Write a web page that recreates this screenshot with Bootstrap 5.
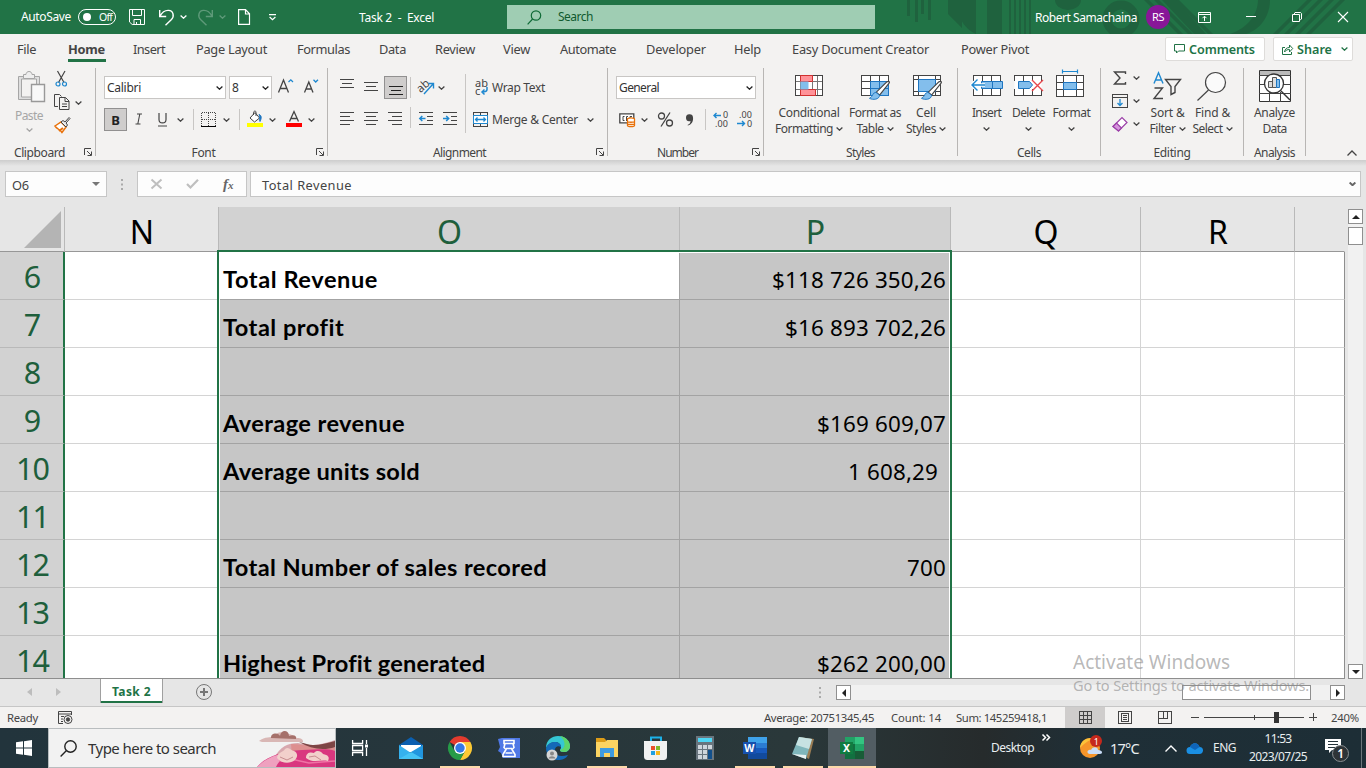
<!DOCTYPE html>
<html lang="en">
<head>
<meta charset="utf-8">
<title>Task 2 - Excel</title>
<link href="https://cdn.jsdelivr.net/npm/bootstrap@5.3.0/dist/css/bootstrap.min.css" rel="stylesheet">
<style>
body{width:1366px;height:768px;overflow:hidden;background:#e6e6e6;font-family:"Noto Sans","Open Sans",sans-serif;font-size:12px;line-height:16px;color:#444;white-space:nowrap}
svg{display:block;overflow:visible;flex:none}
.g{display:grid;align-items:center}
.cv{width:7px;height:4px;fill:none;stroke:#444;stroke-width:1.3}
.ln{stroke:#444;stroke-width:1;fill:none;shape-rendering:crispEdges}
.k{stroke:#444;fill:none}
.b{stroke:#1e88d0;fill:none}
.w{stroke:#fff;fill:none}
/* title bar */
.titlebar{height:34px;background:#217346;color:#fff;padding-left:21px;grid-template-columns:57px 51px 30px 21px 18px 21px 19px 31px 90px 148px 368px 160px 111px 52px 48px 46px 46px 28px}
.titlebar>*{position:relative}
.titlebar .deco{position:absolute;right:0;top:0;overflow:hidden}
.titlebar .cv{stroke:#fff}
.toggle{width:38px;height:16px;border:1px solid #fff;border-radius:8px;font-size:10.5px;line-height:13px}
.knob{width:8px;height:8px;border-radius:50%;background:#fff;margin-left:4px}
.searchbox{height:24px;background:#9fcdb3;color:#0f5a2e}
.searchbox svg{margin-left:20px}
.searchbox span{margin-left:16px}
.avatar{width:24px;height:24px;border-radius:50%;background:#881798;font-size:11px}
.dim{opacity:.28}
.drop1{padding-top:1px}
/* tabs */
.tabs{height:30px;background:#f3f2f1;font-size:12.8px;padding-left:17px;grid-template-columns:51px 65px 63px 101px 82px 56px 68px 57px 86px 88px 58px 169px 204px 108px 80px}
.tabs>span{position:relative;height:16px}
.tabs .on{font-weight:700}
.tabs .on::after{content:"";position:absolute;left:0;bottom:-5px;width:38px;height:3px;background:#217346}
.pill{height:24px;background:#fff;border:1px solid #dedcda;border-radius:2px;color:#217346;font-weight:600;font-size:12.6px}
.pill span{padding-top:1px}
.pill svg{stroke:#217346}
/* ribbon */
.ribbon{height:96px;background:#f3f2f1;padding-top:4px}
.grp{height:88px;border-right:1px solid #b8b6b4;position:relative}
.grp .body{height:76px;align-items:start;display:flow-root}
.grp .body.g{display:grid}
.grp .cap{height:16px;line-height:17px}
.cap.lx{padding-right:16px}
.launch{position:absolute;right:3px;bottom:0;width:8px;height:8px}
.combo{height:23px;background:#fff;border:1px solid #c8c6c4;color:#333;padding:0 2px}
.combo .cv{stroke:#222}
.combo.name{width:122px}.combo.size{width:43px}.combo.fmt{width:140px;margin:8px 0 0 8px}
.pressed{width:23px;height:23px;background:#cfcdcc;border:1px solid #919090;color:#222;font-size:13px}
.pressed .ln{stroke:#222}
.vs{width:1px;background:#c8c6c4;height:21px}
.big{text-align:center;padding-top:2px}
.big .ic{height:35px}
.big .cv{display:inline-block;vertical-align:2px}
.i5{padding:4px 0 0 5px}.i6{padding:0 0 0 6px}.i7{padding:4px 0 0 7px}.i17{padding:4px 0 0 17px}.i72{padding:2px 0 0 7px}
.gc{width:96px}.gf{width:232px}.ga{width:280px}.gn{width:156px}.gs{width:194px}.gce{width:143px}.ge{width:143px}.gan{width:62px}
.clip{grid-template-columns:18px 36px 21px 18px}
.paste{color:#a6a6a6;padding-top:3px}
.paste span{display:block;margin:5px 0 4px -3px}
.paste .cv{stroke:#a6a6a6;margin-left:8px}
.cutcol{padding-top:3px;display:grid;row-gap:7px}
.copydrop{padding-top:33px}
.clipcap{padding-left:14px}
.f1{padding:8px 0 0 8px;grid-template-columns:125px 49px 26px 20px}
.f2{padding:9px 0 0 8px;grid-template-columns:23px 23px 27px 16px 8px 22px 16px 8px 22px 17px 22px 8px}
.a0{grid-template-columns:138px 142px}
.a1{grid-template-columns:24px 20px 26px 8px 20px 8px;padding:8px 0 0 12px}
.a2{grid-template-columns:24px 24px 22px 9px 24px 20px;padding:7px 0 0 12px;height:30px}
.a3{border-left:1px solid #c8c6c4;height:59px;margin:6px 0 0 -1px;padding:2px 0 0 7px}
.wrapline,.mergeline{height:23px}
.wrapline svg{margin-left:2px}
.wrapline span{margin-left:-3px}
.mergeline{margin-top:9px}
.mergeline .cv{margin-left:9px}
.n2{padding:9px 0 0 11px;grid-template-columns:22px 17px 28px 19px 8px 24px 20px;height:32px}
.s0{grid-template-columns:90px 42px 60px}
.fa{margin-left:-5px}
.c0{grid-template-columns:8px 41px 43px 43px}
.e0{grid-template-columns:11px 33px 45px 45px}
.e1{grid-template-columns:21px 8px;height:23px;position:relative;top:-2px}
.fold{padding:0 9px 4px}
/* formula bar */
.fbar{height:47px;background:linear-gradient(#cdcdcd,#e6e6e6 6px);padding:11px 5px 10px;font-size:12.8px}
.box{height:26px;background:#fdfdfd;border:1px solid #c6c6c6}
.box span{padding-top:1px}
.nbox{width:102px;padding:0 6px}
.fbtn{width:110px;padding-left:13px;gap:24px}
.fbtn b{font:italic bold 15px "Liberation Serif",serif;color:#666}
.fbtn b i{font-size:11px}
.finput{margin-left:3px;padding:0 4px 0 11px}
.finput .cv{stroke:#666;stroke-width:2}
.dots{width:30px}
/* worksheet */
.sheet{height:472px;overflow:hidden}
.cells{width:1345px;background:#fff;position:relative;overflow:hidden;height:472px;border-bottom:1px solid #8e8e8e}
.r{display:grid;grid-template-columns:65px 154px 461px 271px 190px 154px 50px}
.r>div{border-right:1px solid #d4d4d4;border-bottom:1px solid #d4d4d4;height:48px;overflow:hidden}
.r>div:last-child{border-right-color:#8e8e8e}
.r.h>div{height:45px;background:#e6e6e6;border-bottom:1px solid #979797;border-right:1px solid #b9b9b9;font-size:32px;line-height:49px;text-align:center;color:#000;padding-left:1px}
.r.h>div:first-child{padding-left:0}
.r.h>div:last-child{border-right-color:#e6e6e6}
.r.h>.s,.r>.rn{background:#d2d2d2;color:#1e5f3c}
.r>.rn{border-right:2px solid #217346;border-bottom-color:#b9b9b9;font-size:30.5px;line-height:49px;text-align:center;padding-left:2px}
.r>.c{background:#c6c6c6;border-color:#a3a3a3;font-family:Lato,sans-serif;color:#000;font-size:23.6px;line-height:55px}
.r>.l{font-weight:700;padding-left:4px}
.r>.v{text-align:right;padding-right:4px;font-family:"Noto Sans",sans-serif;font-size:22.4px;line-height:56px}
.r>.act{background:#fff}
.marq{position:absolute;left:217px;top:43px;width:735px;height:480px;border:2px solid #217346;box-shadow:inset 0 0 0 1px #fff}
.vsb{width:15px;margin:2px 3px 0 3px;background:#f1f1f1;height:470px}
.sbtn{width:15px;height:15px;background:#fff;border:1px solid #8f8f8f}
.vth{width:15px;height:18px;margin-top:3px;background:#fff;border:1px solid #8f8f8f}
/* sheet tabs */
.stabs{height:28px;background:#e6e6e6;border-bottom:1px solid #c6c6c6;grid-template-columns:100px 96px 620px 20px 509px;align-items:start}
.snav{padding:9px 0 0 27px;gap:24px}
.stab{width:63px;height:24px;background:#fff;border:1px solid #a0a0a0;border-width:0 1px;color:#217346;font-weight:700;line-height:25px;box-shadow:inset 0 -2px #217346}
.addtab{margin-top:5px}.grip{margin-top:8px}
.hsb{margin-top:6px;height:15px;background:#f1f1f1}
.hth{width:129px;height:15px;background:#fff;border:1px solid #8f8f8f;margin-left:331px;margin-right:19px}
/* status bar */
.stat{height:21px;background:#f3f2f1;font-size:11.3px;padding-left:7px;grid-template-columns:51px 706px 127px 65px 109px 53px 40px 33px 13px 105px 22px 35px}
.sel{background:#cfcdcc;width:40px;height:21px}
/* taskbar */
.task{height:40px;background:linear-gradient(90deg,#22343c,#26363c 30%,#2a383a 58%,#262b2c 72%,#1f2f37 80%,#1d2e36);color:#e9eef0;grid-template-columns:48px 288px 492px 48px 115px 51px 38px 30px 55px 22px 26px 36px 76px 41px}
.tsearch{height:40px;background:#f2f2f2;border:1px solid #b9bdbf;color:#333;font-size:15px;padding-left:11px;overflow:hidden}
.tsearch span{margin-left:11px}
.apps{grid-template-columns:48px 54px 44px 54px 44px 54px 43px 55px 45px 51px;height:40px}
.app{height:40px;position:relative;display:flex;align-items:center;justify-content:center}
.open::after{content:"";position:absolute;left:50%;margin-left:-20px;width:40px;bottom:0;height:2px;background:#fcd9aa}
.wide::after{width:48px;margin-left:-24px}
.hot{background:#525d63}
.more{margin-top:-21px}
.temp{font-size:14.5px}
.clock{width:58px;line-height:18px;text-align:center}
.wm{position:absolute;left:1073px;top:651px;color:rgba(140,140,140,.62);line-height:22px}
.wm1{font-size:19px;height:23px}.wm2{font-size:14.6px}
</style>
</head>
<body>
<svg width="0" height="0" class="position-absolute"><defs>
<symbol id="cv" viewBox="0 0 7 4"><path d="M.6 .5 3.500 3.200 6.400 .5"/></symbol>
<symbol id="la" viewBox="0 0 8 8"><path d="M.5 7V.5H7M3 3l4 4M7.500 3.500v4h-4" fill="none" stroke="#444"/></symbol>
<symbol id="brush" viewBox="0 0 24 24"><path d="M21.500 1.500c1 .3 1 1.200.4 2L11.500 16.500l-3.500-3.200L19.500 2z" fill="#fff" stroke="#444" stroke-width="1.200"/><path d="M7.500 13.500c-4 0-3 5-7 6.500 3.500 2 11 1.500 11-3.500z" fill="#83beec" stroke="#1e75c0"/></symbol>
</defs></svg>

<header class="g titlebar position-relative">
 <svg class="deco" width="466" height="34" fill="#1f623e">
  <path d="M7 0h3v16H7zM15 0h3v22h-3zM21 0h3v14h-3zM28 0h3v20h-3zM48 0h14v28l-14-14zM60 0h16v34c-8-4-14-10-16-18zM87 0h15v34H87zM109 0h2v34h-2zM114 0h2v34h-2zM119 0h2v34h-2zM124 0h2v34h-2zM129 0h2v34h-2zM155 0h26a13 10 0 0 1-26 0z"/>
  <circle cx="221" cy="19" r="14" fill="none" stroke="#1f623e" stroke-width="9"/>
  <path d="M244 0h5l34 34h-5zM254 0h5l34 34h-5zM264 0h5l34 34h-5zM274 0h5l34 34h-5z"/>
  <path d="M262 0l32 34h12L276 0z"/><path d="M370 0c0 16-10 30-24 34h-16c18-6 28-20 28-34z"/>
  <path d="M407 0h5l-34 34h-5zM418 0h5l-34 34h-5zM429 0h5l-34 34h-5zM440 0h5l-34 34h-5z"/>
 </svg>
 <span data-w="50">AutoSave</span>
 <div class="toggle d-flex align-items-center"><i class="knob"></i><span class="ms-2" data-w="13">Off</span></div>
 <svg width="16" height="16" class="w"><path d="M.5.500h15v15H3.200L.5 13zM3.500.500v6h9v-6M5 15.500v-5h6.500v5M7.500 13v2"/></svg>
 <svg width="15" height="17" class="w" stroke-width="1.400"><path d="M.7 1v6.500h6.500M1 7.200C3 3.500 6 1.200 9.500 1.400c5 .3 6 6 3 9L6.500 16.300"/></svg>
 <svg class="cv"><use href="#cv"/></svg>
 <svg class="dim w" width="15" height="17" stroke-width="1.400"><path d="M14.300 1v6.500H7.800M14 7.200C12 3.500 9 1.200 5.500 1.400c-5 .3-6 6-3 9l6 5.900"/></svg>
 <svg class="cv dim"><use href="#cv"/></svg>
 <svg width="12" height="16" class="w" stroke-width="1.200"><path d="M.6.600h6.900l4 4.200v10.600H.6zM7.500.600v4.400h4"/></svg>
 <svg width="7" height="7" class="w" stroke-width="1.200"><path d="M0 .6h7M.6 3 3.500 5.700 6.400 3"/></svg>
 <span data-w="75" class="drop1">Task 2&nbsp; -&nbsp; Excel</span>
 <div class="searchbox d-flex align-items-center"><svg width="15" height="15" fill="none" stroke="#0f6a36" stroke-width="1.200"><circle cx="9" cy="5.500" r="4.700"/><path d="M5.600 9 .6 14.300"/></svg><span data-w="35">Search</span></div>
 <i></i>
 <span data-w="102" class="drop1">Robert Samachaina</span>
 <div class="avatar d-flex align-items-center justify-content-center"><span data-w="12">RS</span></div>
 <svg width="13" height="11" class="w"><path d="M.5.500h12v10H.5zM.5 2.500h12M6.500 9V4.500M4.500 6.200l2-2 2 2"/></svg>
 <svg width="10" height="2" class="w"><path d="M0 .5h10"/></svg>
 <svg width="10" height="10" class="w"><path d="M.5 2.500h7v7h-7zM2.500 2.500v-1.500l.5-.5h5.500l1 1V7l-.7.600H7.500"/></svg>
 <svg width="10" height="10" class="w" stroke-width="1.100"><path d="M0 0l10 10M10 0 0 10"/></svg>
</header>

<nav class="g tabs">
 <span><span data-w="19">File</span></span><span class="on"><span data-w="37">Home</span></span><span><span data-w="32">Insert</span></span><span><span data-w="71">Page Layout</span></span><span><span data-w="53">Formulas</span></span><span><span data-w="27">Data</span></span><span><span data-w="40">Review</span></span><span><span data-w="27">View</span></span><span><span data-w="56">Automate</span></span><span><span data-w="60">Developer</span></span><span><span data-w="27">Help</span></span><span><span data-w="137">Easy Document Creator</span></span><span><span data-w="68">Power Pivot</span></span>
 <div class="pill d-flex align-items-center me-2 ps-2"><svg width="11" height="10" fill="none"><path d="M.5.500h10v6.500H4.500L2.500 9V7h-2z"/></svg><span class="ms-1" data-w="66">Comments</span></div>
 <div class="pill d-flex align-items-center ps-2"><svg width="11" height="11" fill="none"><path d="M3 3.500H.5v7h9V8M2.500 8c.5-3 2-4.500 5-4.500V1l3.200 3.500L7.500 8V5.500C5.500 5.500 4 6 2.500 8z"/></svg><span class="ms-1" data-w="35">Share</span><svg class="cv ms-auto me-1"><use href="#cv"/></svg></div>
</nav>

<section class="ribbon d-flex">
 <div class="grp gc"><div class="body g clip">
   <i></i>
   <div class="paste"><svg width="28" height="32" fill="none" stroke="#a6a6a6"><path d="M.5 5.500h21v23H.5z" fill="#dedede"/><path d="M3.500 8h15v18h-15z" fill="#f3f2f1"/><path d="M5.500 7.500v-4H8c0-4 6-4 6 0h2.500v4z" fill="#eee"/><path d="M13.500 13.500h13v17h-13z" fill="#f8f8f8" stroke="#999" stroke-width="1.400"/></svg>
    <span data-w="28">Paste</span><svg class="cv"><use href="#cv"/></svg></div>
   <div class="cutcol"><svg width="13" height="16" class="k" stroke-width="1.200"><path d="M3.500 0 10 11.500M11 0 4.500 11.500"/><g class="b"><circle cx="4" cy="13" r="2"/><circle cx="10.500" cy="13" r="2"/></g></svg>
    <svg width="16" height="16" class="k"><path d="M4 12.500H.5V.500h5l2 2M5.500 3.500h6l3.500 3.500v8.500H5.500zM11 3.500V7.500h4M8 10h5M8 12.500h5"/></svg>
    <svg width="16" height="16"><path d="M1 9 7 5l5 5-4 5.500C6 12.500 3 12 1 9z" fill="#fff" stroke="#e8710a" stroke-width="1.500"/><path d="M5 14l4-3" stroke="#e8710a" stroke-width="2"/><path d="M7 5l2-1.500L11 5l4-4.500 1 1L12 6l1.500 2L12 10z" fill="#eee" stroke="#444"/></svg></div>
   <div class="copydrop"><svg class="cv"><use href="#cv"/></svg></div>
  </div><div class="cap clipcap"><span data-w="51">Clipboard</span></div><svg class="launch"><use href="#la"/></svg></div>

 <div class="grp gf"><div class="body">
   <div class="g f1"><div class="combo name d-flex align-items-center justify-content-between"><span data-w="34">Calibri</span><svg class="cv"><use href="#cv"/></svg></div>
    <div class="combo size d-flex align-items-center justify-content-between"><span>8</span><svg class="cv"><use href="#cv"/></svg></div>
    <svg width="16" height="15" class="k" stroke-width="1.300"><path d="M.5 12.500 5.500 0 10.500 12.500M2.200 8.500h6.600"/><path class="b" d="M10.500 2l2.300-2.200L15 2"/></svg>
    <svg width="14" height="15" class="k" stroke-width="1.300"><path d="M.5 12.500 4.800 2 9 12.500M2 9h5.600"/><path class="b" d="M9.500-.2l2.200 2.200L14-.2"/></svg></div>
   <div class="g f2"><div class="pressed d-flex align-items-center justify-content-center"><b>B</b></div>
    <svg width="23" height="15" class="k" stroke-width="1.100"><path d="M10 2h5M8.500 12h5M12.800 2l-2 10"/></svg>
    <svg width="23" height="15" class="k" stroke-width="1.200"><path d="M9 1v6.500c0 4.600 7 4.600 7 0V1M8 14h9"/></svg>
    <svg class="cv"><use href="#cv"/></svg><i class="vs"></i>
    <svg width="15" height="15" class="ln"><path stroke-dasharray="1 1" d="M.5.500h14M.5 7.500h14M.5 1v13M7.500 1v13M14.500 1v13"/><path d="M0 14.500h15" stroke="#000" stroke-width="1.500"/></svg>
    <svg class="cv"><use href="#cv"/></svg><i class="vs"></i>
    <svg width="16" height="17"><path d="M3 7 8 1.500 12.500 7 7.500 11z" fill="#fff" stroke="#444"/><path d="M6.500 4V1.500C7-.5 9-.5 9 1.500V5" fill="none" stroke="#444"/><path d="M12 3.500c3 1 2.500 4 1 7-1-2.500.5-4-1-7z" fill="#1e75c0" stroke="#1e75c0"/><path d="M0 12h16v4H0z" fill="#ff0"/></svg>
    <svg class="cv"><use href="#cv"/></svg>
    <svg width="16" height="17"><path d="M3.500 10.500 8 .5l4.500 10M5 7.500h6" fill="none" stroke="#444" stroke-width="1.300"/><path d="M0 12h16v4H0z" fill="red"/></svg>
    <svg class="cv"><use href="#cv"/></svg></div>
  </div><div class="cap lx text-center"><span data-w="24">Font</span></div><svg class="launch"><use href="#la"/></svg></div>

 <div class="grp ga"><div class="body g a0">
   <div><div class="g a1">
     <svg width="14" height="13" class="ln"><path d="M0-1.500h14M2 2.500h10M0 6.500h14"/></svg>
     <svg width="14" height="13" class="ln"><path d="M0 1.500h14M2 5.500h10M0 9.500h14"/></svg>
     <div class="pressed d-flex align-items-center justify-content-center"><svg width="14" height="13" class="ln"><path d="M0 5.500h14M2 9.500h10M0 13.500h14"/></svg></div>
     <i class="vs"></i>
     <svg width="17" height="17"><text x="-1" y="11" font-size="11.500" fill="#444" transform="rotate(-42 5 8)">ab</text><path d="M6 15 15 5M10.500 4.500H15.500v5" class="b" stroke-width="1.400"/></svg>
     <svg class="cv"><use href="#cv"/></svg></div>
    <div class="g a2">
     <svg width="14" height="13" class="ln"><path d="M0 1.500h14M0 5.500h10M0 9.500h14M0 13.500h10"/></svg>
     <svg width="14" height="13" class="ln"><path d="M0 1.500h14M2 5.500h10M0 9.500h14M2 13.500h10"/></svg>
     <svg width="14" height="13" class="ln"><path d="M0 1.500h14M4 5.500h10M0 9.500h14M4 13.500h10"/></svg>
     <i class="vs"></i>
     <svg width="14" height="13"><path class="ln" d="M0 1.500h14M8 5.500h6M8 9.500h6M0 13.500h14"/><path class="b" stroke-width="1.500" d="M6.500 7.500H.8M3.300 5 .8 7.500 3.300 10"/></svg>
     <svg width="14" height="13"><path class="ln" d="M0 1.500h14M8 5.500h6M8 9.500h6M0 13.500h14"/><path class="b" stroke-width="1.500" d="M0 7.500h5.700M3.200 5l2.500 2.500L3.200 10"/></svg></div></div>
   <div class="a3"><div class="wrapline d-flex align-items-center"><svg width="20" height="17"><text y="8" font-size="11" fill="#444">ab</text><text y="16" font-size="11" fill="#444">c</text><path class="b" stroke-width="1.500" d="M12 8v2.500c0 2-2 2.500-5 2.500M9.500 10.500 7 13l2.500 2.500"/></svg><span data-w="53">Wrap Text</span></div>
    <div class="mergeline d-flex align-items-center"><svg width="15" height="15"><path class="ln" d="M.5.500h14v14H.5zM7.500 0v4M7.500 11v4"/><path d="M.5 3.500h14v8H.5z" fill="#fff" stroke="#1e88d0"/><path class="b" stroke-width="1.300" d="M2.500 7.500h10M4.500 5.500l-2 2 2 2M10.500 5.500l2 2-2 2"/></svg><span class="ms-1" data-w="86">Merge &amp; Center</span><svg class="cv"><use href="#cv"/></svg></div></div>
  </div><div class="cap lx text-center"><span data-w="53">Alignment</span></div><svg class="launch"><use href="#la"/></svg></div>

 <div class="grp gn"><div class="body"><div class="combo fmt d-flex align-items-center justify-content-between"><span data-w="40">General</span><svg class="cv"><use href="#cv"/></svg></div>
   <div class="g n2"><svg width="17" height="13"><path d="M.8.800h14v9h-14z" fill="#fff" stroke="#444" stroke-width="1.300"/><path d="M5.500 3.500H4v4h1.500M7.500 8V3.500H9M11 7V3.500h2" fill="none" stroke="#444"/><path d="M8.500 6v6.500c0 1.500 7 1.500 7 0V6c0-1.500-7-1.500-7 0zM8.500 8.500c0 1 7 1 7 0M8.500 10.800c0 1 7 1 7 0" fill="#fff" stroke="#e8710a" stroke-width="1.300"/></svg>
    <svg class="cv"><use href="#cv"/></svg>
    <svg width="15" height="15" class="k" stroke-width="1.300"><circle cx="3.500" cy="4" r="3"/><circle cx="11.500" cy="11" r="3"/><path d="M12 .5 3 14.500"/></svg>
    <svg width="8" height="11" fill="#444"><path d="M0 4a3.500 3.500 0 0 1 7-.5c.5 4-1.500 7-5 8L1.500 11c2-1 3-2 3-4C2 8 0 6.500 0 4z"/></svg>
    <i class="vs"></i>
    <svg width="15" height="15" font-size="9" fill="#444"><text x="10" y="6" textLength="5">0</text><text x="2" y="14.500" textLength="13">.00</text><path class="b" stroke-width="1.400" d="M8 3.500H.8M3.500 1 1 3.500 3.500 6"/></svg>
    <svg width="15" height="15" font-size="9" fill="#444"><text x="2" y="6" textLength="13">.00</text><text x="10" y="14.500" textLength="5">0</text><path class="b" stroke-width="1.400" d="M0 11.500h7.500M5 9l2.500 2.500L5 14"/></svg></div>
  </div><div class="cap lx text-center"><span data-w="41">Number</span></div><svg class="launch"><use href="#la"/></svg></div>

 <div class="grp gs"><div class="body g s0">
   <div class="big"><div class="ic d-flex justify-content-center pt-1"><svg width="28" height="24"><path d="M1 1.500h26v20H1z" fill="#fff"/><path d="M5.500 1v21M17.500 1v21M22.500 1v21M1 7.500h26M1 15.500h26" stroke="#777"/><path class="ln" d="M.5 1.500h27v20H.5z"/><path d="M5.500 1.500h12v6h-12zM5.500 15.500h15v6h-15z" fill="#ff9298" stroke="#d13030"/><path d="M5.500 7.500h8v8h-8z" fill="#83beec"/></svg></div><span data-w="61">Conditional</span><br><span data-w="58">Formatting</span> <svg class="cv"><use href="#cv"/></svg></div>
   <div class="big"><div class="ic i7"><svg width="30" height="27"><path d="M.5 1.500h27v20H.5z" fill="#fff"/><path class="ln" d="M.5 1.500h27v20H.5zM9.500 1v21M18.500 1v21M.5 7.500h27M.5 14.500h27"/><path d="M9.500 7.500h18v14h-18z" fill="#83beec" stroke="#1e75c0"/><path d="M18.500 7.500v14M9.500 14.500h18" stroke="#1e75c0"/><svg x="8" y="6" width="22" height="22"><use href="#brush"/></svg></svg></div><span class="fa" data-w="52">Format as</span><br><span data-w="27">Table</span> <svg class="cv"><use href="#cv"/></svg></div>
   <div class="big"><div class="ic i17"><svg width="30" height="27"><path d="M.5 1.500h27v20H.5z" fill="#fff"/><path class="ln" d="M.5 1.500h27v20H.5zM5.500 1v21M22.500 1v21M.5 5.500h27M.5 17.500h27"/><path d="M5.500 5.500h17v12h-17z" fill="#83beec" stroke="#1e75c0"/><svg x="8" y="6" width="22" height="22"><use href="#brush"/></svg></svg></div><span data-w="20">Cell</span><br><span data-w="30">Styles</span> <svg class="cv"><use href="#cv"/></svg></div>
  </div><div class="cap text-center"><span data-w="29">Styles</span></div></div>

 <div class="grp gce"><div class="body g c0">
   <i></i>
   <div class="big"><div class="ic i5"><svg width="32" height="24"><path d="M2.500 1.500h27v20h-27z" fill="#fff"/><path class="ln" d="M2.500 7V1.500h27V7M11.500 1v6M20.500 1v6M2.500 15v6.500h27V15M11.500 15v7M20.500 15v7"/><path d="M10.500 7.500h21v7h-21z" fill="#83beec" stroke="#1e75c0"/><path d="M21.500 7.500v7" stroke="#1e75c0"/><path d="M1 11h13M6.500 5.500 1 11l5.500 5.500" stroke="#fff" stroke-width="3.500" fill="none"/><path d="M1 11h13M6.500 5.500 1 11l5.500 5.500" class="b" stroke-width="1.400"/></svg></div><span data-w="29">Insert</span><br><svg class="cv"><use href="#cv"/></svg></div>
   <div class="big"><div class="ic i7"><svg width="30" height="24"><path d="M.5 1.500h27v20H.5z" fill="#fff"/><path class="ln" d="M.5 7V1.500h27V7M9.500 1v6M18.500 1v6M.5 15v6.500h27V15M9.500 15v7M18.500 15v7"/><path d="M4.500 7.500h11l3 3.500-3 3.500h-11z" fill="#83beec" stroke="#1e75c0"/><path d="M18 6l11 11M29 6 18 17" stroke="#e8474c" stroke-width="1.400"/></svg></div><span data-w="33">Delete</span><br><svg class="cv"><use href="#cv"/></svg></div>
   <div class="big"><div class="ic i6"><svg width="28" height="28"><path class="b" stroke-width="1.200" d="M6.500 1.500h15M6.500-.5v4M21.500-.5v4"/><path d="M.5 5.500h27v21H.5z" fill="#fff"/><path class="ln" d="M.5 5.500h27v21H.5zM7.500 6v21M20.500 6v21M.5 12.500h27M.5 19.500h27"/><path d="M7.500 12.500h13v7h-13z" fill="#83beec" stroke="#1e75c0"/></svg></div><span data-w="38">Format</span><br><svg class="cv"><use href="#cv"/></svg></div>
  </div><div class="cap text-center"><span data-w="24">Cells</span></div></div>

 <div class="grp ge"><div class="body g e0">
   <i></i><div><div class="g e1"><svg width="14" height="14" class="k" stroke-width="1.400"><path d="M13.500 3V1H2.500L8 7l-5.500 6h11v-2"/></svg><svg class="cv"><use href="#cv"/></svg></div>
    <div class="g e1"><svg width="16" height="14"><path class="ln" d="M.5.500h15v13H.5zM0 3h16"/><path class="b" stroke-width="1.300" d="M8 5v6.500M5.500 9 8 11.500 10.500 9"/></svg><svg class="cv"><use href="#cv"/></svg></div>
    <div class="g e1"><svg width="16" height="16" stroke="#9b3fa8" stroke-width="1.200"><path d="M1 10.500 10 1.500l5 5-8.500 8.500z" fill="#fff"/><path d="M1 10.500 4.500 7l5 5-3 3z" fill="#d694dd"/></svg><svg class="cv"><use href="#cv"/></svg></div></div>
   <div class="big"><div class="ic i72"><svg width="30" height="28" fill="none" stroke-width="1.400"><path class="b" d="M2 11.500 6.500.8 11 11.500M3.500 8h6"/><path class="k" d="M2.500 16h8L2 26.500h9M13.500 7.500h15l-5.500 7v6l-4 2v-8z"/></svg></div><span data-w="34">Sort &amp;</span><br><span data-w="26">Filter</span> <svg class="cv"><use href="#cv"/></svg></div>
   <div class="big"><div class="ic i72"><svg width="30" height="30" class="k" stroke-width="1.200"><circle cx="18.500" cy="10.500" r="10" fill="#fafafa"/><path d="M11.500 18 .5 28.500"/></svg></div><span data-w="35">Find &amp;</span><br><span data-w="30">Select</span> <svg class="cv"><use href="#cv"/></svg></div>
  </div><div class="cap text-center"><span data-w="37">Editing</span></div></div>

 <div class="grp gan"><div class="body"><div class="big"><div class="ic d-flex justify-content-center"><svg width="32" height="32"><path d="M.5.500h31v31H.5z" fill="#fff" stroke="#333"/><path d="M1 1h30v4H1z" fill="#bbb"/><path class="ln" d="M0 5.500h32M0 14.500h32M0 23.500h32M10.500 22v10M21.500 22v10"/><circle cx="15" cy="13.500" r="9.500" fill="#fff" stroke="#333" stroke-width="1.300"/><path d="M22 21l9 9" stroke="#333" stroke-width="1.400"/><path d="M9.500 11.500h4v6h-4zM13.500 7.500h4v10h-4z" fill="#ddd" stroke="#555"/><path d="M17.500 9.500h3v8h-3z" fill="#83beec" stroke="#1e75c0"/></svg></div><span data-w="41">Analyze</span><br><span data-w="24">Data</span></div></div>
  <div class="cap text-center"><span data-w="41">Analysis</span></div></div>
 <div class="fold ms-auto mt-auto"><svg width="10" height="6" class="k" stroke-width="1.300"><path d="M.5 5.500 5 1l4.500 4.500"/></svg></div>
</section>

<section class="fbar d-flex align-items-start">
 <div class="box nbox d-flex align-items-center justify-content-between"><span data-w="17">O6</span><svg width="8" height="4"><path d="M0 0h8L4 4z" fill="#777"/></svg></div>
 <div class="dots d-flex justify-content-center align-self-center"><svg width="2" height="11" fill="#aaa"><path d="M0 0h2v2H0zM0 4.500h2v2H0zM0 9h2v2H0z"/></svg></div>
 <div class="box fbtn d-flex align-items-center"><svg width="11" height="10" stroke="#bfbfbf" stroke-width="2"><path d="M.5.500l10 9M10.500.500l-10 9"/></svg><svg width="13" height="10" fill="none" stroke="#bfbfbf" stroke-width="2.200"><path d="M1 5l3.500 3.500L12 .8"/></svg><b>f<i>x</i></b></div>
 <div class="box finput flex-grow-1 d-flex align-items-center justify-content-between"><span data-w="90">Total Revenue</span><svg class="cv"><use href="#cv"/></svg></div>
</section>

<main class="sheet d-flex">
 <div class="cells">
  <div class="r h"><div><svg width="61" height="41"><path d="M61 4v37H24z" fill="#b4b4b4"/></svg></div><div>N</div><div class="s">O</div><div class="s">P</div><div>Q</div><div>R</div><div></div></div>
  <div class="r"><div class="rn">6</div><div></div><div class="c l act"><span data-w="155">Total Revenue</span></div><div class="c v"><span data-w="174">$118 726 350,26</span></div><div></div><div></div><div></div></div>
  <div class="r"><div class="rn">7</div><div></div><div class="c l"><span data-w="121">Total profit</span></div><div class="c v"><span data-w="161">$16 893 702,26</span></div><div></div><div></div><div></div></div>
  <div class="r"><div class="rn">8</div><div></div><div class="c l"></div><div class="c v"></div><div></div><div></div><div></div></div>
  <div class="r"><div class="rn">9</div><div></div><div class="c l"><span data-w="182">Average revenue</span></div><div class="c v"><span data-w="129">$169 609,07</span></div><div></div><div></div><div></div></div>
  <div class="r"><div class="rn"><span data-w="33">10</span></div><div></div><div class="c l"><span data-w="197">Average units sold</span></div><div class="c v"><span data-w="90" class="me-2">1 608,29</span></div><div></div><div></div><div></div></div>
  <div class="r"><div class="rn"><span data-w="33">11</span></div><div></div><div class="c l"></div><div class="c v"></div><div></div><div></div><div></div></div>
  <div class="r"><div class="rn"><span data-w="33">12</span></div><div></div><div class="c l"><span data-w="324">Total Number of sales recored</span></div><div class="c v"><span data-w="39">700</span></div><div></div><div></div><div></div></div>
  <div class="r"><div class="rn"><span data-w="33">13</span></div><div></div><div class="c l"></div><div class="c v"></div><div></div><div></div><div></div></div>
  <div class="r"><div class="rn"><span data-w="33">14</span></div><div></div><div class="c l"><span data-w="262">Highest Profit generated</span></div><div class="c v"><span data-w="129">$262 200,00</span></div><div></div><div></div><div></div></div>
  <div class="marq"></div>
 </div>
 <div class="vsb d-flex flex-column"><div class="sbtn d-flex align-items-center justify-content-center"><svg width="8" height="4"><path d="M0 4h8L4 0z" fill="#222"/></svg></div><div class="vth"></div><div class="sbtn mt-auto d-flex align-items-center justify-content-center"><svg width="8" height="4"><path d="M0 0h8L4 4z" fill="#222"/></svg></div></div>
</main>

<div class="g stabs">
 <div class="snav d-flex"><svg width="5" height="8"><path d="M5 0v8L0 4z" fill="#bdbdbd"/></svg><svg width="5" height="8"><path d="M0 0v8l5-4z" fill="#bdbdbd"/></svg></div>
 <div class="stab text-center"><span data-w="39">Task 2</span></div>
 <svg class="addtab" width="16" height="16" fill="none" stroke="#777"><circle cx="8" cy="8" r="7.500"/><path d="M4 8h8M8 4v8" stroke-width="2"/></svg>
 <svg class="grip" width="8" height="11" fill="#aaa"><path d="M3 0h2v2H3zM3 4.500h2v2H3zM3 9h2v2H3z"/></svg>
 <div class="hsb d-flex"><div class="sbtn d-flex align-items-center justify-content-center"><svg width="4" height="8"><path d="M4 0v8L0 4z" fill="#222"/></svg></div><div class="hth"></div><div class="sbtn d-flex align-items-center justify-content-center"><svg width="4" height="8"><path d="M0 0v8l4-4z" fill="#222"/></svg></div></div>
</div>

<footer class="g stat">
 <span data-w="31">Ready</span>
 <svg width="15" height="13" class="k"><path d="M5 12.500H.5V.500h13V4M.5 3h13M3 5.500h3M3 8h2M3 10.500h2"/><circle cx="10" cy="8.500" r="4"/><circle cx="10" cy="8.500" r="1.700" fill="#444"/></svg>
 <span data-w="110">Average: 20751345,45</span><span data-w="50">Count: 14</span><span data-w="91">Sum: 145259418,1</span>
 <div class="sel d-flex align-items-center justify-content-center"><svg width="13" height="13" class="ln"><path d="M.5.500h12v12H.5zM4.500 0v13M8.500 0v13M0 4.500h13M0 8.500h13"/></svg></div>
 <svg width="14" height="13" class="ln"><path d="M.5.500h13v12H.5zM3.500 2.500h7v8h-7zM5 4.500h4M5 6.500h4M5 8.500h4"/></svg>
 <svg width="14" height="13" class="ln"><path d="M.5.500h13v12H.5zM5.500 0v6.500M9.500 0v6.500M0 7.500h10"/></svg>
 <svg width="8" height="9" class="ln"><path d="M0 4.500h8"/></svg>
 <svg width="100" height="13" class="ln"><path d="M0 6.500h100M50.500 4v5"/><path d="M70 1h5v11h-5z" fill="#333" stroke="none"/></svg>
 <svg width="8" height="9" class="ln"><path d="M0 4.500h8M4.500 0v8"/></svg>
 <span data-w="28">240%</span>
</footer>

<div class="g task">
 <svg width="16" height="16" fill="#fff" class="ms-3"><path d="M0 2.300 7 1.300V7.500H0zM8 1.200 16 0v7.500H8zM0 8.500h7v6.200l-7-1zM8 8.500h8V16l-8-1.200z"/></svg>
 <div class="tsearch d-flex align-items-center">
  <svg width="17" height="17" fill="none" stroke="#222" stroke-width="1.400"><circle cx="10.500" cy="6.500" r="5.700"/><path d="M6.500 10.500.6 16.400"/></svg><span data-w="128">Type here to search</span>
  <svg class="ms-auto" width="78" height="38"><path d="M2 12c6-5 12-3 15-5 3-4 8-5 11-2 6-1 9 3 12 4 4 0 6 1 6 4H5z" fill="#d9b7b5"/><path d="M14 9c0-6 8-5 9-2 1-7 9-6 9 0 5-2 8 0 7 3z" fill="#a5706a"/><path d="M16 31c7-14 15-17 25-17 12 3 20 3 37-3v27H10z" fill="#d8a8ae"/><path d="M34 15c12 0 26 4 44-2v25H36z" fill="#dd8f8f"/><path d="M42 13c6 1 10 3 14 3 8 0 14-2 22-4v6c-12 4-24 2-36-5z" fill="#7d4545"/><path d="M0 38c8-10 25-16 45-17 15 0 24-2 33 1v16z" fill="#d9377f"/><path d="M0 38c8-8 18-13 34-15-8 5-13 10-15 15z" fill="#efa1bf"/><path d="M22 32l12-2 18 4 26-2" stroke="#f072a5" stroke-width="1.500" fill="none"/><path d="M20 29c1-7 6-5 8-9 4-3 6 2 9 2 4 2 4 6 1 9-5 4-13 4-18-2zM49 29c0-6 5-6 8-5 3-4 8-1 9 1 5 1 7 3 5 7-8-2-14 3-22-3z" fill="#f2d0cb"/><path d="M23 28l7 3 6-3M52 28l6-1 6 4" stroke="#c88d90" fill="none"/></svg></div>
 <div class="g apps">
  <div class="app"><svg width="17" height="16" fill="none" stroke="#fff" stroke-width="1.300"><path d="M.6 0v3.500h10V0M.6 16v-3.500h10V16M.6 5.500h10v5H.6zM14.500 0v4M14.500 8v8"/><path d="M13 4.500h3v3h-3z" fill="#fff" stroke="none"/></svg></div>
  <div class="app"><svg width="24" height="22"><path d="M0 8 12 0l12 8v3H0z" fill="#0a5fb0"/><path d="M2 8h20v7H2z" fill="#fff"/><path d="M0 8l12 8 12-8v14H0z" fill="#35b1ee"/><path d="M12 15 24 22V8z" fill="#2196df"/><path d="M0 22l12-7 12 7z" fill="#45c3f5"/></svg></div>
  <div class="app open"><svg width="24" height="24" viewBox="0 0 24 24"><path d="M12 12 1.600 6A12 12 0 0 1 22.400 6z" fill="#e33b2e"/><path d="M12 12V6h10.400A12 12 0 0 1 12 24l5-9z" fill="#fcc934"/><path d="M12 12l5 3-5 9A12 12 0 0 1 1.600 6l5 9z" fill="#269b48"/><circle cx="12" cy="12" r="6" fill="#fff"/><circle cx="12" cy="12" r="4.700" fill="#3578e5"/></svg></div>
  <div class="app"><svg width="22" height="22"><path d="M0 2l4-1h18v20H5l-2-5-3-2 2-4z" fill="#4f78e6"/><path d="M6 3.500h10v3H6zM7 6.500l-1 4 2 2-3 5v2h12v-2l-3-5 2-2-1-4z" fill="#4f78e6" stroke="#fff" stroke-width="1.600"/><path d="M8 11.500h6M7.500 16h7" stroke="#fff" stroke-width="1.600"/></svg></div>
  <div class="app"><svg width="24" height="24" viewBox="0 0 24 24"><path d="M0 12C0 4 6 0 12 0c7 0 12 5 12 10 0 4-3 6-6 6s-4-1-4-2 1-1 1-3c0-3-3-5-6-5-4 0-7 2-9 6z" fill="#35c7d5"/><path d="M14 0c7 1 10 6 10 10 0 4-3 6-6 6s-4-1-4-2c5-1 7-8 0-14z" fill="#5dd46b"/><path d="M0 12C2 7 6 6 9 6c3 0 6 2 6 5-3-2-7 0-6 5 1 4 6 5 13 3-2 4-6 5-10 5C5 24 0 19 0 12z" fill="#146ab8"/><circle cx="6" cy="19" r="5.500" fill="#d5d5d5"/><circle cx="6" cy="17.500" r="2" fill="#888"/><path d="M2.500 22.500c1-3 6-3 7 0z" fill="#888"/></svg></div>
  <div class="app open"><svg width="22" height="20"><path d="M0 0h8l2 2v4H0z" fill="#dc9c18"/><path d="M0 4h9l2-2h11v17H0z" fill="#fcd462"/><path d="M4 19v-9h14v9h-4v-4H8v4z" fill="#3e9be0"/></svg></div>
  <div class="app"><svg width="24" height="24"><path d="M7 7V1.500h10V7" fill="none" stroke="#1cb1e8" stroke-width="2"/><path d="M0 5h23v15c0 3-1 4-4 4H4c-3 0-4-1-4-4z" fill="#f1f1f1"/><path d="M7 10h4v4H7z" fill="#e8502a"/><path d="M12 10h4v4h-4z" fill="#7db928"/><path d="M7 15h4v4H7z" fill="#20a0e0"/><path d="M12 15h4v4h-4z" fill="#f6b71b"/></svg></div>
  <div class="app"><svg width="18" height="24"><path d="M0 0h18v24H0z" fill="#69757e"/><path d="M2 2h14v4H2z" fill="#4fd6f4"/><path d="M2 9h4v4H2zM7 9h4v4H7zM12 9h4v4h-4zM2 14h4v4H2zM7 14h4v4H7zM2 19h4v4H2zM7 19h4v4H7z" fill="#cfd6dc"/><path d="M12 14h4v9h-4z" fill="#12508c"/></svg></div>
  <div class="app open"><svg width="24" height="22"><path d="M5 0h19v6H5z" fill="#3fa2ea"/><path d="M5 6h19v5H5z" fill="#2b7cd3"/><path d="M5 11h19v5H5z" fill="#185abd"/><path d="M5 16h19v6H5z" fill="#124a9c"/><path d="M0 5h13v12H0z" fill="#1650ae"/><text x="1.300" y="15" font-size="10.500" font-weight="700" fill="#fff">W</text></svg></div>
  <div class="app open"><svg width="22" height="24"><path d="M7 1 22 3 17 23 15 22z" fill="#9b7d54"/><path d="M7 1 20 3 14 23 0 18z" fill="#7fb6bb"/><path d="M7 1 20 3 17 13 4 9z" fill="#c7e2e2"/><path d="M0 18l14 1v4z" fill="#e9f1f1"/></svg></div>
 </div>
 <div class="app open wide hot"><svg width="24" height="22"><path d="M5 0h10v7H5z" fill="#21a366"/><path d="M15 0h9v7h-9z" fill="#33c481"/><path d="M5 7h10v15H5z" fill="#127040"/><path d="M15 7h9v7h-9z" fill="#21a366"/><path d="M15 14h9v8h-9z" fill="#185c37"/><path d="M0 5h13v12H0z" fill="#107c41"/><text x="3" y="15" font-size="10.500" font-weight="700" fill="#fff">X</text></svg></div>
 <i></i>
 <span data-w="43">Desktop</span>
 <svg class="more w" width="9" height="7" stroke-width="1.500"><path d="M.5.500 3.500 3.500.500 6.500M4.500.500l3 3-3 3"/></svg>
 <svg width="24" height="24"><circle cx="10" cy="12" r="10" fill="#f6952a"/><path d="M0 12A10 10 0 0 1 14 3C8 4 4 8 0 12z" fill="#fcc23a"/><path d="M10 18c-4 0-3-5 1-4 2-4 7-3 7 0 5 0 5 4 2 4z" fill="#c9dcf7"/><circle cx="16" cy="5" r="6" fill="#c5281c"/><text x="13.800" y="8.500" font-size="9" fill="#fff">1</text></svg>
 <span class="temp" data-w="29">17°C</span>
 <svg width="12" height="7" class="w" stroke-width="1.400"><path d="M.5 6.500 6 1l5.500 5.500"/></svg>
 <svg width="16" height="11"><path d="M3 11a3.500 3.500 0 0 1 0-7C5-1 11-1 12.500 4c5 0 4.500 7 0 7z" fill="#1a8fe3"/><path d="M3 4C5-1 11-1 12.500 4L8 7z" fill="#0f64b8"/></svg>
 <span data-w="23">ENG</span>
 <div class="clock"><span data-w="27">11:53</span><br><span data-w="58">2023/07/25</span></div>
 <svg width="37" height="26"><path d="M0 4h16v11H7l-3 3v-3H0z" fill="#fff"/><path d="M3 6.500h10M3 9.500h10M3 12.500h7" stroke="#26343a"/><circle cx="15.500" cy="18.500" r="8" fill="#2e3437" stroke="#8a8f92"/><text x="12.200" y="23" font-size="12" font-weight="600" fill="#fff">1</text><path d="M36.500-7v40" stroke="#6b767b"/></svg>
</div>

<div class="wm"><div class="wm1" data-w="157">Activate Windows</div><div class="wm2" data-w="236">Go to Settings to activate Windows.</div></div>

<script>
// Tracking: each label with data-w is spaced to that width.
document.fonts.ready.then(() => document.querySelectorAll('[data-w]').forEach(el => {
 const range = document.createRange(); range.selectNodeContents(el);
 const w = range.getBoundingClientRect().width;
 el.style.letterSpacing = ((el.dataset.w - w) / el.textContent.length) + 'px';
}));
</script>
</body>
</html>
